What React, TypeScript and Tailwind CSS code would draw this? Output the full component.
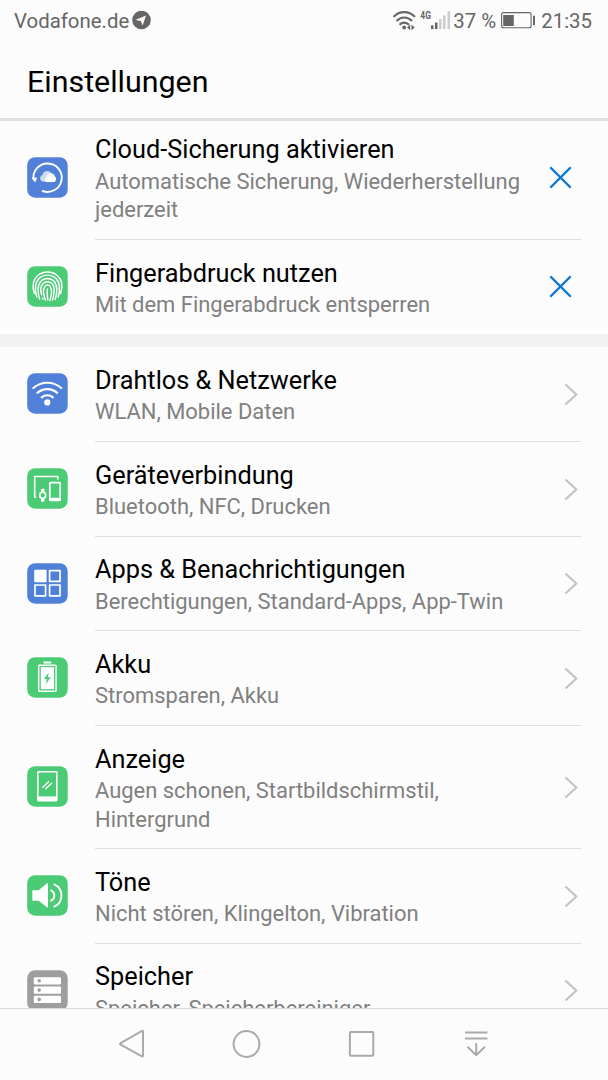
import type { ReactNode } from 'react'

interface SettingItem {
  title: string
  lines: string[]
  color: string
  icon: ReactNode
  height: string
  dismissable?: boolean
  last?: boolean
}

const stroke = {
  fill: 'none',
  stroke: '#fff',
  strokeLinecap: 'round',
  strokeLinejoin: 'round',
} as const

const navStroke = { fill: 'none', stroke: '#aaa', strokeWidth: 2 }

const CloudIcon = (
  <>
    <path d="M15.7 34 A14.2 14.2 0 1 0 6.5 22.5" {...stroke} strokeWidth="1.9" />
    <path d="M4.6 20.6 L10.2 20.8 L8.2 25.6 Z" fill="#fff" />
    <g fill="#cfdcf5">
      <circle cx="16.4" cy="21.3" r="3.2" />
      <circle cx="20.2" cy="18.8" r="4.8" />
      <rect x="16" y="20" width="8" height="4.5" />
    </g>
    <circle cx="23.8" cy="20.2" r="3.9" fill="#fff" />
    <circle cx="26" cy="22" r="3.1" fill="#fff" />
    <circle cx="20.5" cy="22.4" r="2.7" fill="#fff" />
    <rect x="20" y="21" width="6" height="4.1" fill="#fff" />
  </>
)

const FingerprintIcon = (
  <g {...stroke} strokeWidth="1.45">
    <path d="M7.3 27.5 C5.3 21 5.4 14.3 10.5 9.8 C16 4.8 25.2 4.8 30.5 9.8 C35.6 14.3 35.7 21 33.6 27.5" />
    <path d="M9.8 31 C7.6 25 7.7 17 12 12.5 C16.5 8 24.5 8 29 12.5 C33.2 17 33.2 25 31.2 31" />
    <path d="M12.6 33 C10.6 27.5 10.2 19.3 13.9 15.3 C17.3 11.6 23.7 11.6 27.1 15.3 C30.7 19.3 30.3 27.5 28.3 33.3" />
    <path d="M14.6 28.5 C13.2 23.5 13 20.2 15.9 17.7 C18.4 15.2 22.6 15.2 25.1 17.7 C27.8 20.2 27.6 27.5 25.6 34" />
    <path d="M15.8 33 L15.5 32.2 M18.4 34 C16.4 29 16 23.5 17.6 20.8 C19 18.4 22 18.4 23.4 20.8 C25 23.5 24.5 29.5 22.9 34.5" />
    <path d="M20.8 33.8 C20.2 30.5 20 26.5 20.4 23" />
  </g>
)

const WifiTileIcon = (
  <>
    <g {...stroke} strokeWidth="2.1">
      <path d="M6.3 15 C14.3 7.9 26.3 7.9 34.3 15" />
      <path d="M10.4 19.9 C16 14.8 24.6 14.8 30.2 19.9" />
      <path d="M14.7 24.4 C17.9 21.5 22.7 21.5 25.9 24.4" />
    </g>
    <circle cx="20.3" cy="29.4" r="3.1" fill="#fff" />
  </>
)

const DevicesIcon = (
  <>
    <path d="M9.2 29.3 H7.7 V8.5 H30.8 V11.5" {...stroke} strokeWidth="1.6" strokeLinecap="butt" />
    <rect x="22.8" y="14.7" width="10.4" height="17.8" rx="0.8" {...stroke} strokeWidth="1.7" />
    <rect x="22.5" y="29.8" width="11" height="3.2" fill="#fff" />
    <rect x="14" y="20.8" width="3.4" height="13" rx="0.7" fill="#fff" />
    <circle cx="15.7" cy="27.2" r="3" fill="#4bcb76" stroke="#fff" strokeWidth="1.6" />
  </>
)

const AppsIcon = (
  <>
    <rect x="7.2" y="6.8" width="12.4" height="12.4" rx="1" fill="#fff" />
    <g {...stroke} strokeWidth="1.7">
      <rect x="22.6" y="7.6" width="10.4" height="10.8" />
      <rect x="8" y="22" width="10.6" height="10.8" />
      <rect x="22.6" y="22" width="10.4" height="10.8" />
    </g>
  </>
)

const BatteryTileIcon = (
  <>
    <rect x="16.4" y="4.6" width="8" height="2" rx="0.8" fill="#fff" />
    <rect x="11.7" y="8.2" width="17.4" height="26" rx="0.8" {...stroke} strokeWidth="1.5" />
    <rect x="13.8" y="10.2" width="13.2" height="22" fill="#fff" />
    <path d="M21.7 15.5 L16.9 22 H19.8 L18.9 27 L23.8 20.2 H20.9 Z" fill="#4bcb76" />
  </>
)

const DisplayIcon = (
  <>
    <rect x="10.8" y="5.8" width="19" height="28.8" rx="0.8" {...stroke} strokeWidth="1.6" />
    <rect x="10.8" y="30.4" width="19" height="4.6" fill="#fff" />
    <path d="M15.8 21.2 L21.6 15.8 M18.8 22.8 L24.7 17.3" {...stroke} strokeWidth="1.4" />
  </>
)

const SoundIcon = (
  <>
    <path
      d="M5.8 15.2 H11.6 L20 8.3 Q21 7.7 21 8.9 V31.7 Q21 33 20 32.2 L11.6 25.8 H5.8 Q5.3 25.8 5.3 25 V15.9 Q5.3 15.2 5.8 15.2 Z"
      fill="#fff"
    />
    <g {...stroke} strokeWidth="1.9">
      <path d="M24 15.4 C28.5 17.6 28.5 23.5 24 25.7" />
      <path d="M27.3 9.4 C36.8 13.7 36.8 27.4 27.3 31.7" />
    </g>
  </>
)

const StorageIcon = (
  <>
    {[7.2, 16.5, 25.8].map((y) => (
      <g key={y}>
        <rect x="6.8" y={y} width="27.2" height="7.3" rx="1.2" fill="#fff" />
        <circle cx="12.2" cy={y + 3.6} r="1.8" fill="#9e9e9e" />
      </g>
    ))}
  </>
)

const suggestions: SettingItem[] = [
  {
    title: 'Cloud-Sicherung aktivieren',
    lines: ['Automatische Sicherung, Wiederherstellung', 'jederzeit'],
    color: '#5180d8',
    icon: CloudIcon,
    height: 'h-[124px] -mt-[5px]',
    dismissable: true,
  },
  {
    title: 'Fingerabdruck nutzen',
    lines: ['Mit dem Fingerabdruck entsperren'],
    color: '#4bcb76',
    icon: FingerprintIcon,
    height: 'h-[94px]',
    dismissable: true,
    last: true,
  },
]

const settings: SettingItem[] = [
  {
    title: 'Drahtlos & Netzwerke',
    lines: ['WLAN, Mobile Daten'],
    color: '#5180d8',
    icon: WifiTileIcon,
    height: 'h-[95px]',
  },
  {
    title: 'Geräteverbindung',
    lines: ['Bluetooth, NFC, Drucken'],
    color: '#4bcb76',
    icon: DevicesIcon,
    height: 'h-[95px]',
  },
  {
    title: 'Apps & Benachrichtigungen',
    lines: ['Berechtigungen, Standard-Apps, App-Twin'],
    color: '#5180d8',
    icon: AppsIcon,
    height: 'h-[94px]',
  },
  {
    title: 'Akku',
    lines: ['Stromsparen, Akku'],
    color: '#4bcb76',
    icon: BatteryTileIcon,
    height: 'h-[95px]',
  },
  {
    title: 'Anzeige',
    lines: ['Augen schonen, Startbildschirmstil,', 'Hintergrund'],
    color: '#4bcb76',
    icon: DisplayIcon,
    height: 'h-[123px]',
  },
  {
    title: 'Töne',
    lines: ['Nicht stören, Klingelton, Vibration'],
    color: '#4bcb76',
    icon: SoundIcon,
    height: 'h-[95px]',
  },
  {
    title: 'Speicher',
    lines: ['Speicher, Speicherbereiniger'],
    color: '#9e9e9e',
    icon: StorageIcon,
    height: 'h-[94px]',
  },
]

function StatusBar() {
  return (
    <div className="flex h-[42px] shrink-0 items-center justify-between pl-[14px] pr-[16px] text-[20.4px] text-[#666]">
      <div className="flex items-center gap-[3px]">
        <span>Vodafone.de</span>
        <svg width="19" height="19" viewBox="0 0 19 19">
          <circle cx="9.5" cy="9" r="9.3" fill="#666" />
          <path d="M3.4 9.1 L14 4.5 L10.6 14.5 L8.9 10 Z" fill="#fcfcfc" />
        </svg>
      </div>
      <div className="flex items-center">
        {/* WLAN, 4G und Signalstärke */}
        <svg width="60" height="24" viewBox="0 0 60 24">
          <g fill="none" stroke="#666" strokeWidth="2.1">
            <path d="M1.5 7.9 C7.5 1.5 17 1.5 23 7.9" />
            <path d="M4.5 12 C9 7.3 15.6 7.3 20 12" />
            <path d="M7.5 15.8 C10.4 12.9 14.3 12.9 17 15.8" />
          </g>
          <circle cx="12.2" cy="18.5" r="1.9" fill="#666" />
          <path d="M15 18.5 L18.2 15.6 V21.3 Z M22.7 18.5 L19.5 15.6 V21.3 Z" fill="#666" />
          <text
            x="28.3"
            y="10.2"
            fontSize="11"
            fontWeight="700"
            fill="#666"
            textLength="10.6"
            lengthAdjust="spacingAndGlyphs"
          >
            4G
          </text>
          <rect x="39" y="16.3" width="2.5" height="3.8" fill="#666" />
          <rect x="43" y="13.5" width="2.5" height="6.6" fill="#666" />
          <rect x="47" y="10" width="2.5" height="10.1" fill="#ccc" />
          <rect x="51" y="6.5" width="2.5" height="13.6" fill="#ccc" />
          <rect x="55.5" y="2.3" width="2.5" height="17.8" fill="#ccc" />
        </svg>
        <span className="ml-px">37 %</span>
        <svg className="ml-[5px]" width="35" height="17" viewBox="0 0 35 17">
          <rect x="0.6" y="0.6" width="29.5" height="15.2" rx="2" fill="none" stroke="#666" strokeWidth="1.1" />
          <rect x="2.2" y="3" width="10.6" height="11" fill="#666" />
          <rect x="32" y="3.5" width="2" height="10" rx="1" fill="#666" />
        </svg>
        <span className="ml-[5px]">21:35</span>
      </div>
    </div>
  )
}

function SettingRow({ item }: { item: SettingItem }) {
  return (
    <div className={`flex shrink-0 pl-[27px] pr-[27px] ${item.height}`}>
      <div className="flex w-[68px] shrink-0 items-center pb-[1.5px]">
        <svg width="41" height="41" viewBox="0 0 41 41">
          <rect x="0.2" y="0.2" width="40.5" height="40.5" rx="8" fill={item.color} />
          {item.icon}
        </svg>
      </div>
      <div
        className={`flex min-w-0 flex-1 items-center justify-between ${item.last ? '' : 'border-b border-[#dfdfdf]'}`}
      >
        <div className="pt-[3px] whitespace-nowrap">
          <div className="mb-[1.5px] text-[25.3px] leading-[33px] text-black">{item.title}</div>
          {item.lines.map((line) => (
            <div key={line} className="text-[21.95px] leading-[28.6px] text-[#808080]">
              {line}
            </div>
          ))}
        </div>
        {item.dismissable ? (
          <svg className="mr-[9px] mb-px shrink-0" width="23" height="23" viewBox="0 0 23 23">
            <path d="M2 2 L21 21 M21 2 L2 21" fill="none" stroke="#0b76d1" strokeWidth="2.4" strokeLinecap="round" />
          </svg>
        ) : (
          <svg className="mr-[3px] shrink-0" width="14" height="23" viewBox="0 0 14 23">
            <path d="M1.5 1.5 L12.3 11.5 L1.5 21.5" fill="none" stroke="#c3c3c3" strokeWidth="2.1" />
          </svg>
        )}
      </div>
    </div>
  )
}

function NavigationBar() {
  return (
    <div className="flex h-[72px] shrink-0 items-center border-t border-[#d9d9d9] pb-[2px] pl-[118px]">
      <svg width="28" height="30" viewBox="0 0 28 30" {...navStroke}>
        <path d="M2.6 14.2 L24 1.9 Q25 1.6 25 2.6 V26.8 Q25 27.8 24 27.3 L2.6 15.6 Q1.5 14.9 2.6 14.2 Z" />
      </svg>
      <svg className="ml-[86px]" width="29" height="30" viewBox="0 0 29 30" {...navStroke}>
        <circle cx="14.5" cy="15" r="12.9" />
      </svg>
      <svg className="ml-[87px]" width="27" height="30" viewBox="0 0 27 30" {...navStroke}>
        <rect x="1.9" y="3.1" width="23.4" height="23.6" rx="0.8" />
      </svg>
      <svg className="ml-[89px]" width="24" height="30" viewBox="0 0 24 30" {...navStroke}>
        <path d="M1 3.4 H23.4 M1 9.4 H23.4 M12.2 14 V26 M3.4 17.7 L12.2 26.2 L21 17.7" />
      </svg>
    </div>
  )
}

export default function App() {
  return (
    <div className="flex h-[1080px] w-[608px] flex-col overflow-hidden bg-[#fcfcfc] font-['Roboto',sans-serif]">
      <StatusBar />
      {/* Titelleiste */}
      <div className="flex h-[79px] shrink-0 items-center border-b-[3px] border-[#dfdfdf] pt-[5px] pl-[27px]">
        <h1 className="text-[30.4px] leading-none text-black">Einstellungen</h1>
      </div>
      {/* Einstellungsliste */}
      <div className="flex min-h-0 flex-1 flex-col overflow-hidden">
        {suggestions.map((item) => (
          <SettingRow key={item.title} item={item} />
        ))}
        <div className="h-[13px] shrink-0 bg-[#f2f2f2]" />
        {settings.map((item) => (
          <SettingRow key={item.title} item={item} />
        ))}
      </div>
      <NavigationBar />
    </div>
  )
}
